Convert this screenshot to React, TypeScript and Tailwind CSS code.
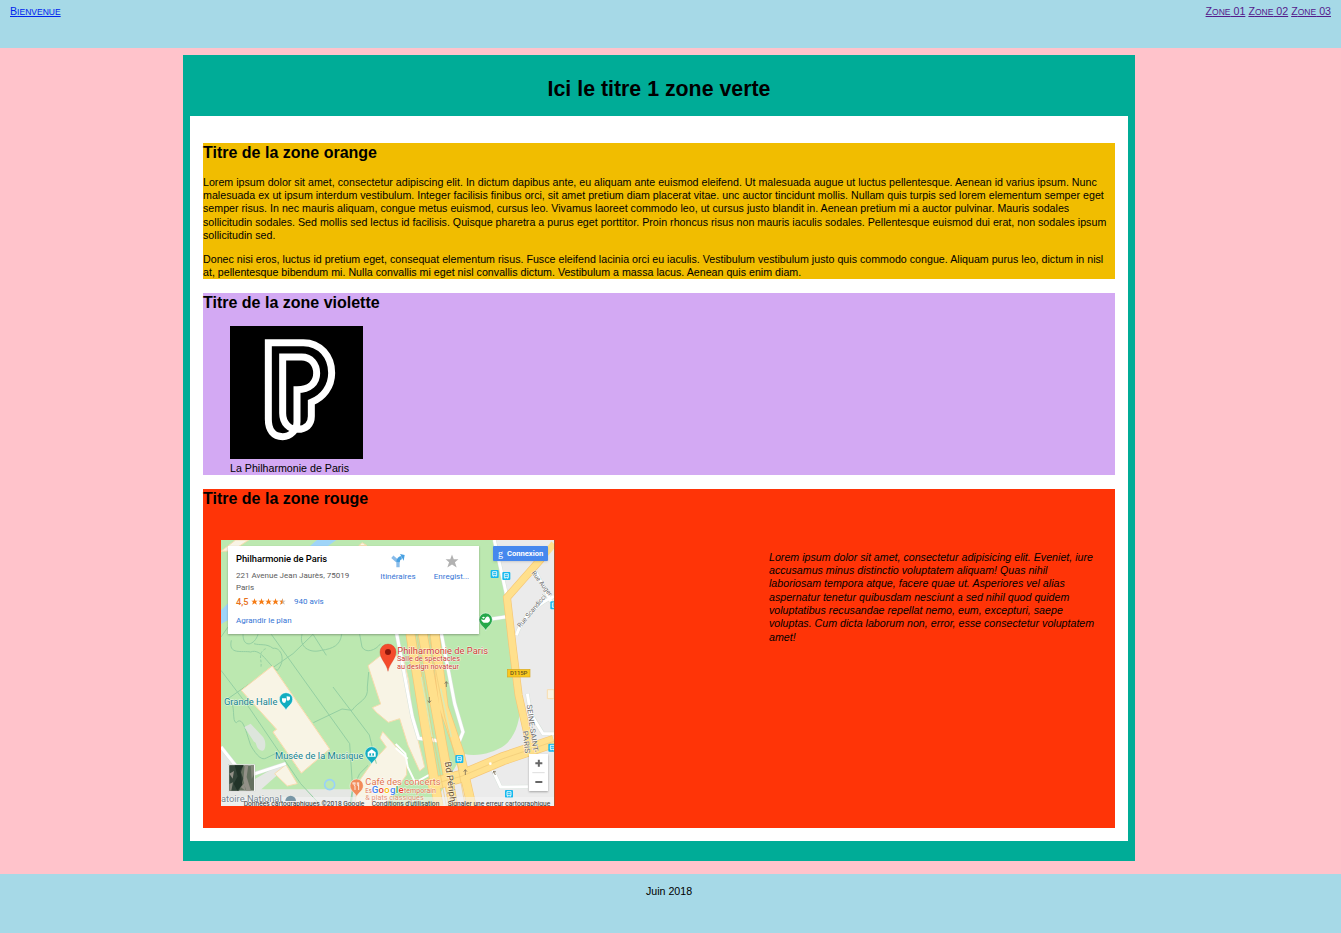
import React from "react";

function PhilharmonieLogo() {
  return (
    <svg className="block h-[133px] w-[133px] bg-black" viewBox="105 123 399 399" fill="none">
      <path
        d="M220 173H325C375 173 410 213 410 264C410 305 385 338 349 352V394C349 420 332 433 308 433C283 433 263 415 263 385V216H320C348 216 365 238 365 265C365 293 345 314 306 314V410C306 436 286 455 263 455C235 455 220 435 220 403Z"
        stroke="white"
        strokeWidth="21"
      />
    </svg>
  );
}

type Label = { x: number; y: number; size: number; width: number; text: string; color: string; rotate?: number };

const labels: Label[] = [
  { x: 538, y: 352, size: 29, width: 272, text: "Philharmonie de Paris", color: "#cf3c34" },
  { x: 537, y: 373, size: 21, width: 189, text: "Salle de spectacles", color: "#cf3c34" },
  { x: 537, y: 395, size: 21, width: 186, text: "au design novateur", color: "#cf3c34" },
  { x: 18, y: 503, size: 28, width: 160, text: "Grande Halle", color: "#12828e" },
  { x: 171, y: 666, size: 28, width: 265, text: "Musée de la Musique", color: "#12828e" },
  { x: 442, y: 743, size: 27, width: 226, text: "Café des concerts", color: "#e2754f" },
  { x: 442, y: 768, size: 20, width: 20, text: "Es", color: "#e2754f" },
  { x: 558, y: 768, size: 20, width: 96, text: "temporain", color: "#e2754f" },
  { x: 442, y: 789, size: 20, width: 175, text: "& plats classiques", color: "#e2754f" },
  { x: 9, y: 796, size: 27, width: 182, text: "atoire National", color: "#4c5f6e" },
  { x: 907, y: 273, size: 20, width: 122, text: "Rue Scandicci", color: "#6b6b6b", rotate: -50 },
  { x: 940, y: 108, size: 20, width: 88, text: "Rue Auger", color: "#6b6b6b", rotate: 53 },
  { x: 926, y: 503, size: 22, width: 146, text: "SEINE-SAINT-", color: "#6b6b6b", rotate: 82 },
  { x: 914, y: 582, size: 22, width: 68, text: "PARIS", color: "#6b6b6b", rotate: 84 },
  { x: 680, y: 675, size: 27, width: 122, text: "Bd Périph", color: "#66502f", rotate: 82 },
];

function Pin({ x, y, color, kind }: { x: number; y: number; color: string; kind: string }) {
  return (
    <g transform={`translate(${x} ${y})`}>
      <path d="M0 31C-3 20-20 14-20-2A20 20 0 0 1 20-2C20 14 3 20 0 31Z" fill={color} stroke="#ffffff" strokeWidth="1.5" />
      {kind === "mask" && <path d="M-12-5H0V2Q-1 9-6 9Q-11 8-12 2ZM2-11L12-10V-2Q8 5 2 1Z" fill="white" />}
      {kind === "museum" && (
        <>
          <path d="M-12-5L0-14L12-5V8H-12Z" fill="white" />
          <path d="M-7-2H7V5H-7Z" fill={color} />
          <path d="M-2-2H2V5H-2Z" fill="white" />
        </>
      )}
      {kind === "food" && <path d="M-8-12V-5Q-8-2-5-2V11M-11-12V-6M-5-12V-5M2-12V-5Q3-1 6-1V11M6-12V-1" stroke="white" strokeWidth="2.5" fill="none" />}
      {kind === "nature" && <path d="M-14-3Q-9-1-4-1L0-8Q6-15 11-8Q15-2 11 4Q6 9-6 7Q-12 5-14-3ZM-11-8Q-7-13-2-9L-6-5Z" fill="white" />}
    </g>
  );
}

function Transit({ x, y }: { x: number; y: number }) {
  return (
    <g transform={`translate(${x} ${y})`}>
      <rect x="-12" y="-12" width="24" height="24" rx="3" fill="#16b9ee" />
      <path d="M-6-7H6V5H-6ZM-4 5V8M4 5V8" fill="none" stroke="white" strokeWidth="2.5" />
      <path d="M-5-1H5" stroke="white" strokeWidth="2" />
    </g>
  );
}

function MapDrawing() {
  return (
    <svg className="block h-[266px] w-[333px] font-['Roboto',sans-serif]" viewBox="9 9 999 798" preserveAspectRatio="none">
      <rect x="9" y="9" width="999" height="798" fill="#bce8b0" />
      <path d="M830 9H1008V807H645L735 650C775 660 825 650 860 625C895 595 905 550 908 500L864 190L826 9Z" fill="#ebebeb" />
      <path d="M9 630L65 694L82 807H9ZM70 750L190 680L205 690L130 757H400L460 807H9Z" fill="#e5e7e4" />
      <path d="M9 220L31 198V249L9 261ZM276 27L297 9H355L330 27Z" fill="#9fd4f8" />

      <g fill="#f8f4e5" stroke="#f8dcae" strokeWidth="3">
        <path d="M163 387L335 636L250 708L165 585L176 577L70 460Z" />
        <path d="M204 683L238 740L208 747L170 710Z" />
        <path d="M450 386L485 358L555 356L572 430L583 540L620 690L605 702L570 625L545 545L511 556L475 526L463 512L488 501Z" />
        <path d="M9 43L53 9L92 9L60 30L31 42ZM423 26L432 17L447 26Z" />
        <path d="M494 584L566 665V713L500 807H410L420 737L460 680L505 630L486 603Z" />
        <path d="M988 458H1008V485H988Z" />
      </g>

      <g fill="none" stroke="#94cfa2" strokeWidth="3">
        <path d="M9 400L90 507L248 740L310 807M30 485L225 350L285 292M160 292L395 620L404 755L395 807M345 450L454 594L475 680" />
        <path d="M40 310C30 355 72 340 98 345C130 332 150 385 178 400C205 370 190 330 165 334C145 318 126 326 108 320M32 485C55 500 40 555 55 557C75 535 84 585 98 625C117 658 132 671 145 663L176 648" />
        <path d="M75 292C75 335 110 325 120 292M252 292C242 330 275 350 310 340C345 335 367 325 371 292M425 292L432 330C443 350 472 341 488 320M286 557L372 516L402 520C420 493 453 490 448 450L452 405" />
        <path d="M400 807L404 755L425 710L450 685" />
        <path d="M9 300L30 270M285 292L325 355" />
        <path d="M143 335C115 350 135 374 128 393" strokeDasharray="8 5" />
      </g>

      <path d="M163 387L335 636L250 708L165 585L176 577L70 460Z" fill="#f8f4e5" stroke="#f8dcae" strokeWidth="3" />
      <path d="M79 570L98 560L135 600C147 615 142 644 132 641C112 637 118 615 108 614Z" fill="#dde5dc" />
      <circle cx="335" cy="743" r="15" fill="none" stroke="#99d1f8" strokeWidth="5" />
      <path d="M533 621L562 650L569 690L592 737L640 710M569 665L533 633" fill="none" stroke="white" strokeWidth="6" />

      <g fill="none" stroke="#d8e2db" strokeWidth="12">
        <path d="M536 290L583 540L602 604L665 612M670 290L710 500L735 585L720 622M829 9L866 175M780 252L866 239M895 295Q920 220 1008 178M948 95L1005 205M928 470L938 530L975 590L1008 590M823 696L848 750L930 749M9 630L80 720L203 680" />
      </g>
      <g fill="none" stroke="white" strokeWidth="9">
        <path d="M536 290L583 540L602 604L665 612M670 290L710 500L735 585L720 622M829 9L866 175M780 252L866 239M895 295Q920 220 1008 178M948 95L1005 205M928 470L938 530L975 590L1008 590M823 696L848 750L930 749M9 630L80 720L203 680" />
      </g>

      <g fill="none" stroke="#f6c776" strokeWidth="29">
        <path d="M577 290L627 600L662 807M614 290L652 510L706 807M650 290L677 510L725 650L761 807" />
        <path d="M630 745L730 718L855 665L1008 613" strokeWidth="39" />
        <path d="M970 65L867 182L884 330L902 475L935 620" strokeWidth="24" />
      </g>
      <g fill="none" stroke="#ffe08c" strokeWidth="25">
        <path d="M577 290L627 600L662 807M614 290L652 510L706 807M650 290L677 510L725 650L761 807" />
        <path d="M630 745L730 718L855 665L1008 613" strokeWidth="35" />
        <path d="M1008 20L970 65L867 182L884 330L902 475L935 620" strokeWidth="20" />
      </g>
      <g fill="none" stroke="#efc975" strokeWidth="2">
        <path d="M630 745L730 718L855 665L1008 613M632 290L680 540L720 690L742 807M596 290L640 570L685 807" />
      </g>
      <path d="M610 420L642 600M668 455L700 600" fill="none" stroke="#d8ebb9" strokeWidth="4" />

      <g fill="none" stroke="#7b6e58" strokeWidth="2.5">
        <path d="M685 450V434M680 440L685 434L690 440M634 480V497M629 491L634 497L639 491M742 714V698M737 704L742 698L747 704M832 714L827 702M825 709L827 702L834 705" />
      </g>
      <circle cx="817" cy="680" r="4" fill="white" />
      <rect x="868" y="397" width="68" height="23" fill="#fbc81e" stroke="#d8a824" strokeWidth="2" />
      <text x="876" y="415" fontSize="18" textLength="52" fill="#67551e" fontWeight="500">D115P</text>

      <Transit x={830} y={111} />
      <Transit x={865} y={117} />
      <Transit x={1009} y={205} />
      <Transit x={1003} y={632} />
      <Transit x={724} y={666} />
      <Transit x={873} y={771} />

      <rect x="9" y="780" width="999" height="27" fill="#f5f5f5" opacity="0.55" />

      {labels.map((l) => (
        <text
          key={l.text}
          x={l.x}
          y={l.y}
          fontSize={l.size}
          textLength={l.width}
          lengthAdjust="spacingAndGlyphs"
          fill={l.color}
          stroke="white"
          strokeOpacity="0.7"
          strokeWidth="3"
          paintOrder="stroke"
          opacity={l.y > 780 ? 0.75 : 1}
          transform={l.rotate ? `rotate(${l.rotate} ${l.x} ${l.y})` : undefined}
        >
          {l.text}
        </text>
      ))}

      <Pin x={204} y={489} color="#12adc0" kind="mask" />
      <Pin x={461} y={651} color="#12adc0" kind="museum" />
      <Pin x={416} y={748} color="#f18b59" kind="food" />
      <Pin x={803} y={250} color="#25a849" kind="nature" />
      <path d="M202 792A16 16 0 0 1 234 792Z" fill="#7897a6" />
      <path d="M510 403C506 380 486 366 486 345A24 24 0 0 1 534 345C534 366 514 380 510 403Z" fill="#f44b2c" stroke="#cf3a23" />
      <circle cx="510" cy="345" r="9" fill="#8d160b" />
      <text x="461" y="767" fontSize="29" textLength="96" fontWeight="500" stroke="white" strokeWidth="3" paintOrder="stroke">
        <tspan fill="#4285f4">G</tspan><tspan fill="#ea4335">o</tspan><tspan fill="#fbbc05">o</tspan><tspan fill="#4285f4">g</tspan><tspan fill="#34a853">l</tspan><tspan fill="#ea4335">e</tspan>
      </text>
      <g fill="#333333" fontSize="19">
        <text x="77" y="806" textLength="362" lengthAdjust="spacingAndGlyphs">Données cartographiques ©2018 Google</text>
        <text x="461" y="806" textLength="203" lengthAdjust="spacingAndGlyphs">Conditions d'utilisation</text>
        <text x="689" y="806" textLength="308" lengthAdjust="spacingAndGlyphs">Signaler une erreur cartographique</text>
      </g>

      <rect x="31" y="682" width="80" height="82" fill="white" stroke="#b9bbb7" strokeWidth="1" />
      <rect x="34" y="685" width="74" height="76" fill="#64705f" />
      <path d="M34 685H76L69 706L76 725L63 761H34Z" fill="#34453a" />
      <path d="M50 685L59 718L47 740L58 761L73 743L67 700L77 685Z" fill="#213328" />
      <path d="M80 685H91L86 720L99 761H84L76 729ZM34 710L48 702L44 725ZM69 751L79 738L82 761Z" fill="#929087" />
      <path d="M98 685H108V712L101 726ZM34 741L45 736L40 761H34Z" fill="#84877b" />
    </svg>
  );
}

function Star({ half = false }: { half?: boolean }) {
  return (
    <svg className="block h-[7px] w-[7px]" viewBox="0 0 24 24">
      <path d="M12 1L15 9H23L17 14L20 23L12 18L4 23L7 14L1 9H9Z" fill={half ? "#c9c3bd" : "#f57c16"} />
      {half && <path d="M12 1V18L4 23L7 14L1 9H9Z" fill="#f57c16" />}
    </svg>
  );
}

function PlaceCard() {
  return (
    <div className="absolute left-[7px] top-[6px] flex h-[88px] w-[251px] bg-white pl-2 text-[8px] leading-[12px] text-[#5b5b5b] shadow-[0_1px_2px_rgba(0,0,0,0.3)]">
      <div className="w-[128px] shrink-0 whitespace-nowrap pt-[7px]">
        <div className="text-[9.4px] font-medium leading-[12px] tracking-[-0.05px] text-black">Philharmonie de Paris</div>
        <div className="pt-[4.5px] text-[8px]">221 Avenue Jean Jaurès, 75019<br />Paris</div>
        <div className="flex items-center pt-[1.5px] leading-[13px]">
          <span className="w-[15px] text-[9.2px] font-medium text-[#e7711b]">4,5</span>
          <span className="flex w-[43px]"><Star /><Star /><Star /><Star /><Star half /></span>
          <span className="text-[8px] text-[#3474d5]">940 avis</span>
        </div>
        <div className="pt-[7px] text-[8px] text-[#3474d5]">Agrandir le plan</div>
      </div>
      <div className="flex w-[68px] flex-col items-center pt-[8px] text-[#3474d5]">
        <svg className="h-[14px] w-[14px]" viewBox="0 0 42 42" fill="none">
          <path d="M4 8L21 23V40" stroke="#8abce9" strokeWidth="10" />
          <path d="M21 24Q22 12 32 11" stroke="#48a1e2" strokeWidth="10" />
          <path d="M27 0L41 3L38 20Z" fill="#48a1e2" />
        </svg>
        <span className="pt-[3px]">Itinéraires</span>
      </div>
      <div className="flex w-[39px] flex-col items-center pt-[8px] text-[#3474d5]">
        <svg className="h-[14px] w-[14px]" viewBox="0 0 24 24"><path d="M12 1L15 9H23L17 14L20 23L12 18L4 23L7 14L1 9H9Z" fill="#b2b2b2" /></svg>
        <span className="pt-[3px]">Enregist...</span>
      </div>
    </div>
  );
}

function ParisMap() {
  return (
    <div className="relative h-[266px] w-[333px] shrink-0 overflow-hidden font-['Roboto',sans-serif] shadow-[1px_0_0_#b4532b]">
      <MapDrawing />
      <PlaceCard />
      <div className="absolute right-[6px] top-[6px] flex h-[15px] w-[55px] items-center gap-[4px] rounded-[1px] bg-[#4688ee] pl-[5px] text-white shadow-sm">
        <span className="font-['Liberation_Serif',serif] text-[10px] leading-none">g</span>
        <span className="text-[7.6px] font-bold leading-none">Connexion</span>
      </div>
      <div className="absolute bottom-[15px] right-[6px] h-[37px] w-[19px] bg-white shadow-[0_1px_2px_rgba(0,0,0,0.3)]">
        <svg className="block h-[37px] w-[19px]" viewBox="0 0 57 111" fill="none">
          <path d="M19 28H40M29.5 17.5V38.5M19 84H40" stroke="#666" strokeWidth="6" />
          <path d="M10 56H47" stroke="#dedede" strokeWidth="3" />
        </svg>
      </div>
    </div>
  );
}

function CapsLink({ initial, rest, suffix = "", href, color }: { initial: string; rest: string; suffix?: string; href: string; color: string }) {
  return (
    <a href={href} className={`${color} underline`}>
      {initial}
      <span className="text-[8.533px]">{rest}</span>
      {suffix}
    </a>
  );
}

const heading = "pt-px text-[16px] font-bold leading-[18.67px]";

export default function App() {
  return (
    <div className="flex h-[933px] w-[1341px] flex-col bg-[#ffc3cb] font-['Liberation_Sans',Arial,sans-serif] text-[10.667px] leading-[13.333px] text-black">
      <header className="flex h-12 shrink-0 items-start justify-between bg-[#a6d9e7] px-[10px] pt-[5px]">
        <CapsLink href="#" initial="B" rest="IENVENUE" color="text-[#0024ee]" />
        <nav className="flex gap-[3px]">
          <CapsLink href="#zone1" initial="Z" rest="ONE" suffix=" 01" color="text-[#551a8b]" />
          <CapsLink href="#zone2" initial="Z" rest="ONE" suffix=" 02" color="text-[#551a8b]" />
          <CapsLink href="#zone3" initial="Z" rest="ONE" suffix=" 03" color="text-[#551a8b]" />
        </nav>
      </header>

      <main className="ml-[183px] mt-[7px] h-[806px] w-[952px] shrink-0 bg-[#00ac97] px-[7px]">
        <h1 className="h-[61px] pt-[22px] text-center text-[21.333px] font-bold leading-[25px]">Ici le titre 1 zone verte</h1>
        <div className="flex h-[725px] flex-col gap-[14px] bg-white px-[13px] pt-[27px]">
          <section id="zone1" className="h-[136px] whitespace-nowrap bg-[#f1bd00]">
            <h2 className={heading}>Titre de la zone orange</h2>
            <p className="mt-[12.97px] tracking-[0.009px]">
              Lorem ipsum dolor sit amet, consectetur adipiscing elit. In dictum dapibus ante, eu aliquam ante euismod eleifend. Ut malesuada augue ut luctus pellentesque. Aenean id varius ipsum. Nunc<br />
              malesuada ex ut ipsum interdum vestibulum. Integer facilisis finibus orci, sit amet pretium diam placerat vitae. unc auctor tincidunt mollis. Nullam quis turpis sed lorem elementum semper eget<br />
              semper risus. In nec mauris aliquam, congue metus euismod, cursus leo. Vivamus laoreet commodo leo, ut cursus justo blandit in. Aenean pretium mi a auctor pulvinar. Mauris sodales<br />
              sollicitudin sodales. Sed mollis sed lectus id facilisis. Quisque pharetra a purus eget porttitor. Proin rhoncus risus non mauris iaculis sodales. Pellentesque euismod dui erat, non sodales ipsum<br />
              sollicitudin sed.
            </p>
            <p className="mt-[10.667px] tracking-[0.009px]">
              Donec nisi eros, luctus id pretium eget, consequat elementum risus. Fusce eleifend lacinia orci eu iaculis. Vestibulum vestibulum justo quis commodo congue. Aliquam purus leo, dictum in nisl<br />
              at, pellentesque bibendum mi. Nulla convallis mi eget nisl convallis dictum. Vestibulum a massa lacus. Aenean quis enim diam.
            </p>
          </section>

          <section id="zone2" className="h-[182px] bg-[#d3a9f3]">
            <h2 className={heading}>Titre de la zone violette</h2>
            <figure className="ml-[27px] mt-[13.33px]">
              <PhilharmonieLogo />
              <figcaption className="pt-[3px]">La Philharmonie de Paris</figcaption>
            </figure>
          </section>

          <section id="zone3" className="h-[339px] bg-[#ff3407]">
            <h2 className={heading}>Titre de la zone rouge</h2>
            <div className="mt-[31.33px] flex items-start justify-between pl-[18px] pr-[13px]">
              <ParisMap />
              <p className="mt-[10.67px] w-[333px] whitespace-nowrap italic">
                Lorem ipsum dolor sit amet, consectetur adipisicing elit. Eveniet, iure<br />
                accusamus minus distinctio voluptatem aliquam! Quas nihil<br />
                laboriosam tempora atque, facere quae ut. Asperiores vel alias<br />
                aspernatur tenetur quibusdam nesciunt a sed nihil quod quidem<br />
                voluptatibus recusandae repellat nemo, eum, excepturi, saepe<br />
                voluptas. Cum dicta laborum non, error, esse consectetur voluptatem<br />
                amet!
              </p>
            </div>
          </section>
        </div>
      </main>

      <footer className="mt-[13px] flex-1 bg-[#a6d9e7] pr-[3px] pt-[10.5px] text-center">Juin 2018</footer>
    </div>
  );
}
